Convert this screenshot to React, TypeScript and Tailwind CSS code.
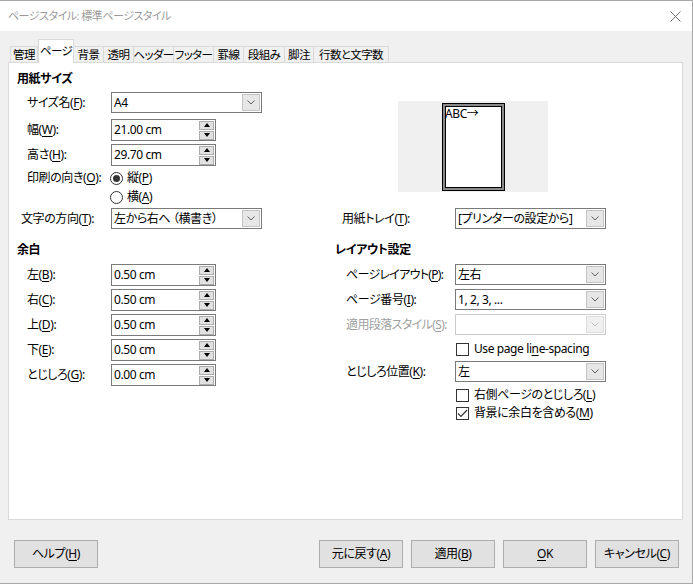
import React from 'react'

const FONT = "font-['Noto_Sans','Noto_Sans_CJK_JP',sans-serif] [font-feature-settings:'palt'] tracking-[-0.4px]"

const TABS = [
  { label: '管理', w: 'w-[28px]' },
  { label: 'ページ', w: 'w-[36px]', active: true },
  { label: '背景', w: 'w-[30px]' },
  { label: '透明', w: 'w-[30px]' },
  { label: 'ヘッダー', w: 'w-[40px]' },
  { label: 'フッター', w: 'w-[40px]' },
  { label: '罫線', w: 'w-[30px]' },
  { label: '段組み', w: 'w-[41px]' },
  { label: '脚注', w: 'w-[29px]' },
  { label: '行数と文字数', w: 'w-[75px]' },
]

function U({ children }: { children: React.ReactNode }) {
  return <span className="underline underline-offset-[2px]">{children}</span>
}

function Chevron({ color = '#606060' }: { color?: string }) {
  return (
    <svg width="8" height="5" viewBox="0 0 8 5">
      <path d="M0.5 0.5 L4 4 L7.5 0.5" fill="none" stroke={color} strokeWidth="1" />
    </svg>
  )
}

function Dropdown({ value, disabled }: { value?: string; disabled?: boolean }) {
  return (
    <div
      className={`w-[151px] h-[21px] flex bg-white border ${
        disabled ? 'border-[#cccccc]' : 'border-[#7a7a7a]'
      }`}
    >
      <div className="flex-1 pl-[2px] leading-[19px] text-black whitespace-nowrap overflow-hidden">{value}</div>
      <div
        className={`w-[18px] m-px flex items-center justify-center border ${
          disabled ? 'bg-[#f0f0f0] border-[#dddddd]' : 'bg-[#e6e6e6] border-[#c4c4c4]'
        }`}
      >
        <Chevron color={disabled ? '#c0c0c0' : '#606060'} />
      </div>
    </div>
  )
}

function SpinBtn({ up }: { up?: boolean }) {
  return (
    <div className="w-[15px] h-[9px] bg-[#e1e1e1] border border-[#adadad] flex items-center justify-center">
      <svg width="6" height="4" viewBox="0 0 6 4">
        <path d={up ? 'M0 4 L3 0 L6 4 Z' : 'M0 0 L3 4 L6 0 Z'} fill="#000" />
      </svg>
    </div>
  )
}

function Spin({ value }: { value: string }) {
  return (
    <div className="w-[105px] h-[22px] flex bg-white border border-[#7a7a7a]">
      <div className="flex-1 pl-[2px] leading-[20px] text-black">{value}</div>
      <div className="flex flex-col justify-center gap-px mr-px">
        <SpinBtn up />
        <SpinBtn />
      </div>
    </div>
  )
}

function Radio({ checked }: { checked?: boolean }) {
  return (
    <div className="w-[13px] h-[13px] rounded-full border border-[#333333] bg-white flex items-center justify-center">
      {checked && <div className="w-[7px] h-[7px] rounded-full bg-[#333333]" />}
    </div>
  )
}

function Check({ checked }: { checked?: boolean }) {
  return (
    <div className="w-[13px] h-[13px] border border-[#333333] bg-white flex items-center justify-center">
      {checked && (
        <svg width="11" height="9" viewBox="0 0 11 9">
          <path d="M1 4.5 L4 7.5 L10 1" fill="none" stroke="#333333" strokeWidth="1.2" />
        </svg>
      )}
    </div>
  )
}

function Button({ children }: { children: React.ReactNode }) {
  return (
    <div className="w-[84px] h-[28px] bg-[#e1e1e1] border border-[#adadad] flex items-center justify-center text-black whitespace-nowrap">
      {children}
    </div>
  )
}

export default function App() {
  return (
    <div
      className={`w-[693px] h-[584px] bg-[#f0f0f0] border-t border-r border-b border-[#a8a8a8] flex flex-col text-[12px] ${FONT}`}
    >
      {/* title bar */}
      <div className="h-[30px] bg-white flex items-center justify-between pl-[8px] pr-[11px]">
        <span className="text-[#9a9a9a] text-[11px] tracking-[-0.5px]">ページスタイル: 標準ページスタイル</span>
        <svg width="11" height="11" viewBox="0 0 11 11">
          <path d="M0.5 0.5 L10.5 10.5 M10.5 0.5 L0.5 10.5" stroke="#707070" strokeWidth="1" />
        </svg>
      </div>

      <div className="flex-1 flex flex-col pl-[8px] pt-[8px]">
        {/* tabs */}
        <div className="h-[24px] flex items-end ml-[2px] -mb-px relative z-10 text-[11.5px] tracking-[-0.6px]">
          {TABS.map((t, i) =>
            t.active ? (
              <div
                key={t.label}
                className={`${t.w} h-[24px] bg-white border-t border-l border-r border-[#d9d9d9] flex items-center justify-center pb-[1px] text-black whitespace-nowrap`}
              >
                {t.label}
              </div>
            ) : (
              <div
                key={t.label}
                className={`${t.w} h-[17px] bg-[#f0f0f0] border-t border-r border-b border-[#d9d9d9] ${
                  i === 0 ? 'border-l' : ''
                } flex items-center justify-center leading-[15px] text-black whitespace-nowrap`}
              >
                {t.label}
              </div>
            )
          )}
        </div>

        {/* panel */}
        <div className="w-[675px] h-[458px] bg-white border border-[#d9d9d9] flex pl-[8px]">
          {/* left column */}
          <div className="w-[320px] flex flex-col">
            <div className="mt-[8px] h-[16px] leading-[16px] font-bold text-black">用紙サイズ</div>

            <div className="mt-[5px] flex items-center">
              <div className="w-[94px] pl-[10px]">サイズ名(<U>F</U>):</div>
              <Dropdown value="A4" />
            </div>
            <div className="mt-[6px] flex items-center">
              <div className="w-[94px] pl-[10px]">幅(<U>W</U>):</div>
              <Spin value="21.00 cm" />
            </div>
            <div className="mt-[3px] flex items-center">
              <div className="w-[94px] pl-[10px]">高さ(<U>H</U>):</div>
              <Spin value="29.70 cm" />
            </div>
            <div className="mt-[3px] h-[18px] flex items-center">
              <div className="w-[93px] pl-[10px]">印刷の向き(<U>O</U>):</div>
              <Radio checked />
              <span className="ml-[4px]">縦(<U>P</U>)</span>
            </div>
            <div className="mt-px h-[18px] flex items-center pl-[93px]">
              <Radio />
              <span className="ml-[4px]">横(<U>A</U>)</span>
            </div>
            <div className="mt-[2px] flex items-center">
              <div className="w-[94px] pl-[4px]">文字の方向(<U>T</U>):</div>
              <Dropdown value="左から右へ （横書き）" />
            </div>

            <div className="mt-[13px] h-[16px] leading-[16px] font-bold text-black">余白</div>
            <div className="mt-[6px] flex flex-col gap-[3px]">
              {[
                ['左', 'B', '0.50 cm'],
                ['右', 'C', '0.50 cm'],
                ['上', 'D', '0.50 cm'],
                ['下', 'E', '0.50 cm'],
                ['とじしろ', 'G', '0.00 cm'],
              ].map(([l, k, v]) => (
                <div key={k} className="flex items-center">
                  <div className="w-[94px] pl-[10px]">
                    {l}(<U>{k}</U>):
                  </div>
                  <Spin value={v} />
                </div>
              ))}
            </div>
          </div>

          {/* right column */}
          <div className="flex-1 flex flex-col">
            <div className="mt-[38px] ml-[61px] w-[150px] h-[91px] bg-[#f0f0f0] pt-[2px] pl-[44px]">
              <div className="w-[63px] h-[88px] bg-white border border-black shadow-[inset_0_0_0_2px_#8a8a8a,inset_0_0_0_3px_#000] pl-[2px] pt-[3px] leading-[14px] text-black text-[12px]">
                ABC→
              </div>
            </div>

            <div className="mt-[16px] flex items-center">
              <div className="w-[118px] pl-[5px]">用紙トレイ(<U>T</U>):</div>
              <Dropdown value="[プリンターの設定から]" />
            </div>

            <div className="mt-[13px] h-[16px] leading-[16px] font-bold text-black -ml-[2px]">レイアウト設定</div>
            <div className="mt-[6px] flex items-center">
              <div className="w-[118px] pl-[9px] tracking-[-0.7px]">ページレイアウト(<U>P</U>):</div>
              <Dropdown value="左右" />
            </div>
            <div className="mt-[4px] flex items-center">
              <div className="w-[118px] pl-[9px]">ページ番号(<U>I</U>):</div>
              <Dropdown value="1, 2, 3, ..." />
            </div>
            <div className="mt-[4px] flex items-center">
              <div className="w-[118px] pl-[9px] text-[#a0a0a0] tracking-[-0.6px]">適用段落スタイル(<U>S</U>):</div>
              <Dropdown disabled />
            </div>
            <div className="mt-[6px] h-[16px] flex items-center pl-[119px]">
              <Check />
              <span className="ml-[5px]">
                Use page li<U>n</U>e-spacing
              </span>
            </div>
            <div className="mt-[4px] flex items-center">
              <div className="w-[118px] pl-[9px]">とじしろ位置(<U>K</U>):</div>
              <Dropdown value="左" />
            </div>
            <div className="mt-[5px] h-[16px] flex items-center pl-[119px]">
              <Check />
              <span className="ml-[5px]">右側ページのとじしろ(<U>L</U>)</span>
            </div>
            <div className="mt-[2px] h-[16px] flex items-center pl-[119px]">
              <Check checked />
              <span className="ml-[5px]">背景に余白を含める(<U>M</U>)</span>
            </div>
          </div>
        </div>

        {/* buttons */}
        <div className="mt-[20px] ml-[6px] w-[665px] flex">
          <Button>
            ヘルプ(<U>H</U>)
          </Button>
          <div className="flex-1" />
          <div className="flex gap-[8px]">
            <Button>
              元に戻す(<U>A</U>)
            </Button>
            <Button>
              適用(<U>B</U>)
            </Button>
            <Button>
              <U>O</U>K
            </Button>
            <Button>
              キャンセル(<U>C</U>)
            </Button>
          </div>
        </div>
      </div>
    </div>
  )
}
